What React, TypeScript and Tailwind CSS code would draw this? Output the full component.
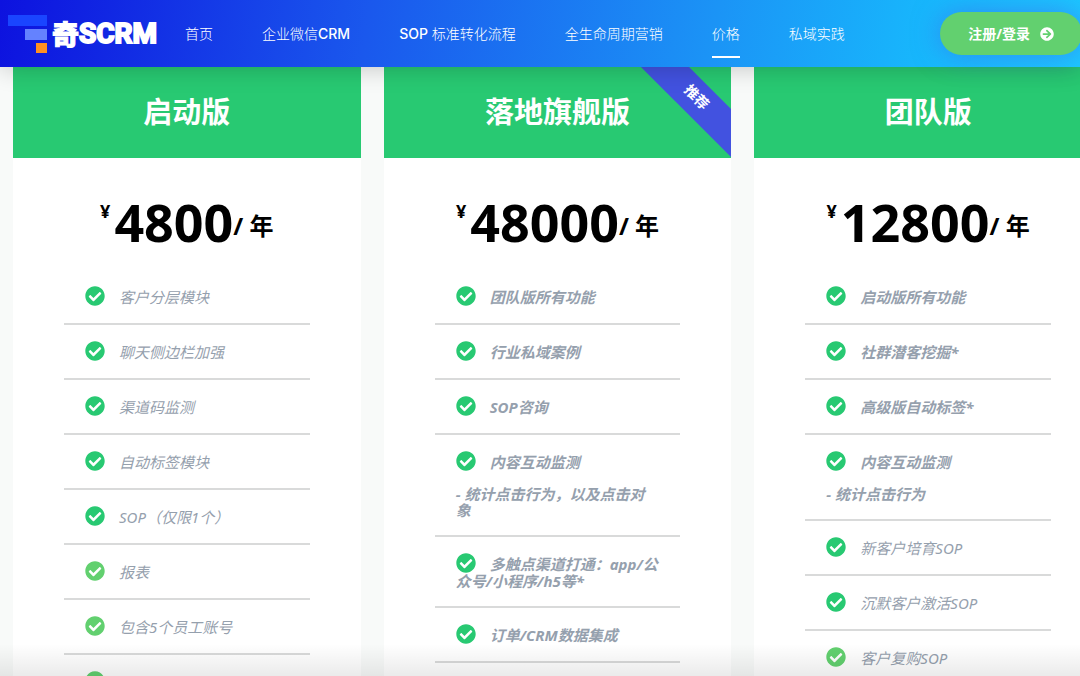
import React from 'react';
import { FaArrowCircleRight, FaCheckCircle } from 'react-icons/fa';

interface Feature {
  text: string;
  note?: string;
  strong?: boolean;
  light?: boolean;
}

interface Plan {
  name: string;
  price: string;
  badge?: string;
  features: Feature[];
}

const navItems = [
  { label: '首页' },
  { label: '企业微信', suffix: 'CRM' },
  { prefix: 'SOP', label: ' 标准转化流程' },
  { label: '全生命周期营销' },
  { label: '价格', active: true },
  { label: '私域实践' },
];

const plans: Plan[] = [
  {
    name: '启动版',
    price: '4800',
    features: [
      { text: '客户分层模块' },
      { text: '聊天侧边栏加强' },
      { text: '渠道码监测' },
      { text: '自动标签模块' },
      { text: 'SOP（仅限1个）' },
      { text: '报表', light: true },
      { text: '包含5个员工账号', light: true },
      { text: '', light: true },
    ],
  },
  {
    name: '落地旗舰版',
    price: '48000',
    badge: '推荐',
    features: [
      { text: '团队版所有功能', strong: true },
      { text: '行业私域案例', strong: true },
      { text: 'SOP咨询', strong: true },
      { text: '内容互动监测', note: '- 统计点击行为，以及点击对象', strong: true },
      { text: '多触点渠道打通：app/公众号/小程序/h5等*', strong: true },
      { text: '订单/CRM数据集成', strong: true },
    ],
  },
  {
    name: '团队版',
    price: '12800',
    features: [
      { text: '启动版所有功能', strong: true },
      { text: '社群潜客挖掘*', strong: true },
      { text: '高级版自动标签*', strong: true },
      { text: '内容互动监测', note: '- 统计点击行为', strong: true },
      { text: '新客户培育SOP' },
      { text: '沉默客户激活SOP' },
      { text: '客户复购SOP', light: true },
    ],
  },
];

const Logo = () => (
  <a href="#" className="flex items-center gap-1 shrink-0 text-white">
    <svg width="40" height="40" viewBox="0 0 40 40" aria-hidden="true">
      <rect x="0" y="1" width="39" height="11" fill="#1a45ff" />
      <rect x="17" y="15" width="22" height="11" fill="#6482ff" />
      <rect x="28" y="29" width="11" height="10" fill="#ff9022" />
    </svg>
    <span className="flex items-center leading-none">
      <span className="text-[27px] font-black font-['Noto_Sans_CJK_SC',sans-serif] [-webkit-text-stroke:1px_white]">奇</span>
      <span className="text-[28px] font-bold font-['Roboto',sans-serif] [-webkit-text-stroke:2px_white]">SCRM</span>
    </span>
  </a>
);

const Header = () => (
  <header className="relative z-20 flex items-center h-[67px] pl-2 shrink-0 bg-[linear-gradient(100deg,#0d12df_0%,#1a58ed_34%,#1b94f6_66%,#17bcfd_88%,#1cc8ff_100%)] shadow-[0_2px_24px_rgba(0,0,0,0.2)]">
    <Logo />
    <nav className="flex items-center gap-[49px] ml-7 font-['Inter','Noto_Sans_CJK_SC',sans-serif] text-sm font-light text-white whitespace-nowrap">
      {navItems.map(item => (
        <a
          key={item.label}
          href="#"
          className={`flex items-center h-12 border-b-2 border-t-2 border-t-transparent ${item.active ? 'border-b-white' : 'border-b-transparent'}`}
        >
          <span>
            {item.prefix && <span className="font-medium">{item.prefix}</span>}
            {item.label}
            {item.suffix && <span className="font-medium">{item.suffix}</span>}
          </span>
        </a>
      ))}
    </nav>
    <button className="flex items-center gap-2.5 h-[43px] px-7 ml-auto -mr-0.5 shrink-0 rounded-full bg-[#62d06f] text-white text-sm font-bold whitespace-nowrap shadow-[0_0_28px_rgba(72,88,232,0.5)]">
      注册/登录 <FaArrowCircleRight size={14} />
    </button>
  </header>
);

const FeatureItem = ({ feature }: { feature: Feature }) => (
  <li className={`px-[21px] pt-4 pb-[17px] border-b-2 border-[#d9dada] italic text-[15px] leading-4 text-[#95a0ad] ${feature.strong ? 'font-bold' : 'font-normal'}`}>
    <p>
      <FaCheckCircle
        size={20}
        className={`inline-block align-[-3px] mr-3.5 ${feature.light ? 'text-[#62d06f]' : 'text-[#28c972]'}`}
      />
      {feature.text}
    </p>
    {feature.note && <p className="mt-[15px]">{feature.note}</p>}
  </li>
);

const PlanCard = ({ plan }: { plan: Plan }) => (
  <article className="relative overflow-hidden bg-white">
    <div className="flex items-center justify-center h-[91px] pb-0.5 bg-[#28c972]">
      <h2 className="text-[29px] leading-none font-bold text-white">{plan.name}</h2>
    </div>
    {plan.badge && (
      <div className="absolute top-4 -right-[47px] w-40 h-[34px] pb-0.5 pr-1.5 flex items-center justify-center rotate-45 bg-[#4252e0] text-white text-sm font-bold">
        {plan.badge}
      </div>
    )}
    <div className="flex justify-center h-28 pt-[38px] font-bold text-black">
      <span className="mr-1 text-lg leading-[30px]">¥</span>
      <span className="text-[52px] leading-[52px]">{plan.price}</span>
      <span className="text-2xl leading-[60px]">/ 年</span>
    </div>
    <ul className="mx-[51px]">
      {plan.features.map((f, i) => (
        <FeatureItem key={i} feature={f} />
      ))}
    </ul>
  </article>
);

export default function App() {
  return (
    <div className="relative flex flex-col h-screen overflow-hidden bg-[#f8faf9] font-['Noto_Sans','Noto_Sans_CJK_SC',sans-serif]">
      <Header />
      <main className="grid grid-cols-3 gap-[23px] pl-[13px] -mr-[22px]">
        {plans.map(plan => (
          <PlanCard key={plan.name} plan={plan} />
        ))}
      </main>
      <div className="absolute inset-x-0 bottom-0 h-8 z-10 pointer-events-none bg-linear-to-t from-black/8 to-transparent" />
    </div>
  );
}
